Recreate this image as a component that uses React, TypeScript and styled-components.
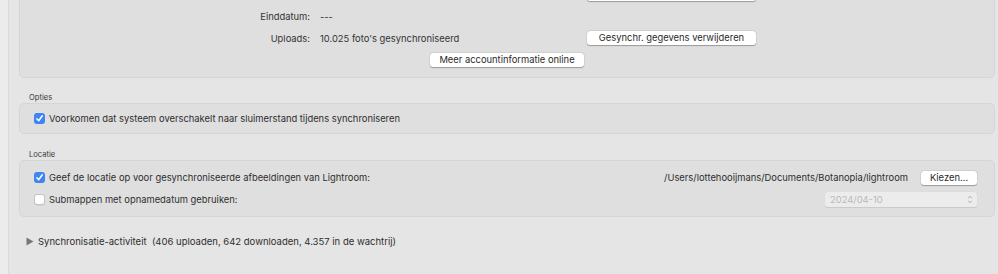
import React from "react";
import styled, { createGlobalStyle } from "styled-components";

const Global = createGlobalStyle`
  html, body { margin: 0; padding: 0; background: #e5e5e5; }
  body { font-family: Inter, "Liberation Sans", sans-serif; color: #2e2e2e; }
  * { box-sizing: border-box; }
`;

const Shell = styled.div`
  display: flex;
  width: 998px;
  height: 274px;
  overflow: hidden;
  background: #e5e5e5;
`;

const SideStrip = styled.div`
  width: 9px;
  flex: none;
  background: #ececec;
  border-right: 1px solid #dadada;
`;

const Main = styled.div`
  flex: 1;
  display: flex;
  flex-direction: column;
  padding: 0 3px 0 10px;
`;

const Panel = styled.div<{ $top?: number }>`
  background: #dfdfdf;
  border: 1px solid #d6d6d6;
  border-radius: 5px;
  margin-top: ${(p) => p.$top ?? 0}px;
`;

const AccountPanel = styled(Panel)`
  display: flex;
  flex-direction: column;
  padding: 0 0 6px;
`;

const InfoRow = styled.div`
  display: flex;
  align-items: center;
  height: 22px;
`;

const Label = styled.div`
  width: 290px;
  text-align: right;
  font-size: 9.4px;
  color: #333;
`;

const Value = styled.div`
  width: 277px;
  padding-left: 10px;
  font-size: 9.4px;
  color: #333;
`;

const Button = styled.button<{ $w: number }>`
  width: ${(p) => p.$w}px;
  height: 14px;
  padding: 0;
  border: none;
  border-radius: 3px;
  background: #fff;
  box-shadow: 0 0.5px 1px rgba(0, 0, 0, 0.28), 0 0 0 0.5px rgba(0, 0, 0, 0.08);
  font-family: inherit;
  font-size: 9.4px;
  color: #2a2a2a;
  line-height: 14px;
  text-align: center;
`;

const CenterRow = styled.div`
  display: flex;
  justify-content: center;
  height: 22px;
  align-items: center;
`;

const SectionTitle = styled.div<{ $top: number }>`
  margin-top: ${(p) => p.$top}px;
  padding-left: 10px;
  font-size: 7.6px;
  line-height: 10px;
  color: #3a3a3a;
`;

const CheckPanel = styled(Panel)<{ $pad: number }>`
  display: flex;
  flex-direction: column;
  padding: ${(p) => p.$pad}px 17px ${(p) => p.$pad}px 14px;
`;

const CheckRow = styled.div`
  display: flex;
  align-items: center;
  height: 22px;
  gap: 4px;
`;

const Box = styled.span<{ $on?: boolean }>`
  width: 11px;
  height: 11px;
  flex: none;
  border-radius: 3px;
  display: inline-flex;
  align-items: center;
  justify-content: center;
  background: ${(p) => (p.$on ? "#3d84f5" : "#fff")};
  border: ${(p) => (p.$on ? "none" : "0.5px solid #c4c4c4")};
  box-shadow: ${(p) => (p.$on ? "none" : "0 0.5px 0.5px rgba(0,0,0,0.1)")};
`;

const CheckText = styled.span`
  font-size: 9.4px;
  color: #2e2e2e;
  flex: 1;
`;

const PathText = styled.span`
  font-size: 9.4px;
  color: #2e2e2e;
  margin-right: 9px;
`;

const Select = styled.div`
  width: 152px;
  height: 15px;
  border-radius: 3px;
  background: #ececec;
  box-shadow: 0 0.5px 1px rgba(0, 0, 0, 0.1);
  display: flex;
  align-items: center;
  justify-content: space-between;
  padding: 0 4px 0 5px;
  font-size: 9.4px;
  color: #b9b9b9;
`;

const Disclosure = styled.div`
  display: flex;
  align-items: center;
  gap: 4px;
  margin-top: 16px;
  padding-left: 7px;
  height: 16px;
  font-size: 9.5px;
  color: #2e2e2e;
`;

const Check = () => (
  <svg width="9" height="9" viewBox="0 0 9 9">
    <path d="M1.8 4.8 L3.7 6.8 L7.3 1.8" fill="none" stroke="#fff" strokeWidth="1.5" strokeLinecap="round" strokeLinejoin="round" />
  </svg>
);

const Chevrons = () => (
  <svg width="6" height="9" viewBox="0 0 6 9">
    <path d="M1 3.2 L3 1.3 L5 3.2 M1 5.8 L3 7.7 L5 5.8" fill="none" stroke="#a8a8a8" strokeWidth="0.9" />
  </svg>
);

const Triangle = () => (
  <svg width="8" height="9" viewBox="0 0 8 9">
    <path d="M0.5 0.5 L7.5 4.5 L0.5 8.5 Z" fill="#777" />
  </svg>
);

export default function App() {
  return (
    <>
      <Global />
      <Shell>
        <SideStrip />
        <Main>
          <AccountPanel $top={-18}>
            <InfoRow>
              <Label />
              <Value />
              <Button $w={169} aria-hidden="true" />
            </InfoRow>
            <InfoRow>
              <Label>Einddatum:</Label>
              <Value>---</Value>
            </InfoRow>
            <InfoRow>
              <Label>Uploads:</Label>
              <Value>10.025 foto's gesynchroniseerd</Value>
              <Button $w={169}>Gesynchr. gegevens verwijderen</Button>
            </InfoRow>
            <CenterRow>
              <Button $w={154}>Meer accountinformatie online</Button>
            </CenterRow>
          </AccountPanel>

          <SectionTitle $top={15}>Opties</SectionTitle>
          <CheckPanel $pad={3.5}>
            <CheckRow>
              <Box $on><Check /></Box>
              <CheckText>Voorkomen dat systeem overschakelt naar sluimerstand tijdens synchroniseren</CheckText>
            </CheckRow>
          </CheckPanel>

          <SectionTitle $top={16}>Locatie</SectionTitle>
          <CheckPanel $pad={5.5}>
            <CheckRow>
              <Box $on><Check /></Box>
              <CheckText>Geef de locatie op voor gesynchroniseerde afbeeldingen van Lightroom:</CheckText>
              <PathText>/Users/lottehooijmans/Documents/Botanopia/lightroom</PathText>
              <Button $w={56}>Kiezen...</Button>
            </CheckRow>
            <CheckRow>
              <Box />
              <CheckText>Submappen met opnamedatum gebruiken:</CheckText>
              <Select>
                <span>2024/04-10</span>
                <Chevrons />
              </Select>
            </CheckRow>
          </CheckPanel>

          <Disclosure>
            <Triangle />
            <span>Synchronisatie-activiteit&nbsp;&nbsp;(406 uploaden, 642 downloaden, 4.357 in de wachtrij)</span>
          </Disclosure>
        </Main>
      </Shell>
    </>
  );
}
